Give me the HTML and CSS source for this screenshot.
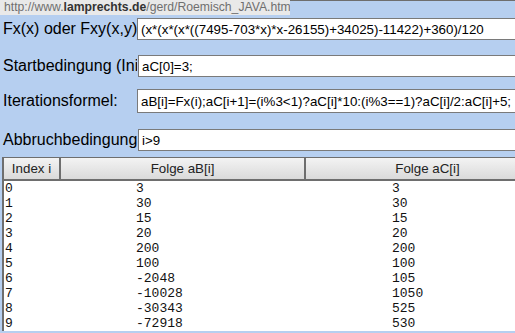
FILE: index.html
```html
<!DOCTYPE html>
<html lang="de">

<head>
    <meta charset="UTF-8">
    <title>Roemisch JAVA</title>
    <link rel="stylesheet" href="styles.css">
</head>

<body>
    <div class="status-url">http://www.<b>lamprechts.de</b>/gerd/Roemisch_JAVA.htm</div>

    <div class="page">
        <form class="params">
            <div class="param-row row-fx">
                <label>Fx(x) oder Fxy(x,y)</label>
                <input type="text" value="(x*(x*(x*((7495-703*x)*x-26155)+34025)-11422)+360)/120">
            </div>
            <div class="param-row row-start">
                <label>Startbedingung (Ini</label>
                <input type="text" value="aC[0]=3;">
            </div>
            <div class="param-row row-iter">
                <label>Iterationsformel:</label>
                <input type="text" class="wide" value="aB[i]=Fx(i);aC[i+1]=(i%3&lt;1)?aC[i]*10:(i%3==1)?aC[i]/2:aC[i]+5;">
            </div>
            <div class="param-row row-stop">
                <label>Abbruchbedingung</label>
                <input type="text" value="i&gt;9">
            </div>
        </form>

        <div class="result">
            <div class="result-head">
                <div class="col col-i">Index i</div>
                <div class="col col-b">Folge aB[i]</div>
                <div class="col col-c">Folge aC[i]</div>
            </div>
            <div class="result-body">
                <div class="line"><span class="col-i">0</span><span class="col-b">3</span><span class="col-c">3</span></div>
                <div class="line"><span class="col-i">1</span><span class="col-b">30</span><span class="col-c">30</span></div>
                <div class="line"><span class="col-i">2</span><span class="col-b">15</span><span class="col-c">15</span></div>
                <div class="line"><span class="col-i">3</span><span class="col-b">20</span><span class="col-c">20</span></div>
                <div class="line"><span class="col-i">4</span><span class="col-b">200</span><span class="col-c">200</span></div>
                <div class="line"><span class="col-i">5</span><span class="col-b">100</span><span class="col-c">100</span></div>
                <div class="line"><span class="col-i">6</span><span class="col-b">-2048</span><span class="col-c">105</span></div>
                <div class="line"><span class="col-i">7</span><span class="col-b">-10028</span><span class="col-c">1050</span></div>
                <div class="line"><span class="col-i">8</span><span class="col-b">-30343</span><span class="col-c">525</span></div>
                <div class="line"><span class="col-i">9</span><span class="col-b">-72918</span><span class="col-c">530</span></div>
            </div>
        </div>
    </div>
</body>

</html>
```

FILE: styles.css
```css
html,
body {
    overflow: hidden;
}

body {
    margin: 0;
    padding: 0;
    background-color: #b6cff0;
    font-family: "Liberation Sans", Arial, sans-serif;
    color: #000;
}

.status-url {
    position: absolute;
    top: 0;
    left: 0;
    width: 286px;
    height: 15px;
    padding-left: 4px;
    background-color: #e9e9e9;
    color: #6f6f6f;
    font-size: 12.2px;
    line-height: 15px;
    white-space: nowrap;
    overflow: hidden;
}

.status-url b {
    color: #333;
}

.page {
    width: 560px;
    border-top: 1px solid #6e6e6e;
}

.params {
    margin: 0;
    padding-top: 17px;
}

.param-row {
    display: flex;
    align-items: center;
    height: 22px;
    margin-bottom: 15px;
}

.param-row label {
    width: 134px;
    padding-left: 3px;
    font-size: 16px;
    white-space: nowrap;
    overflow: hidden;
}

.param-row input {
    width: 410px;
    height: 22px;
    box-sizing: border-box;
    margin: 0;
    padding: 0 3px;
    border: 1px solid #7a7a7a;
    background: white;
    font-family: "Liberation Sans", Arial, sans-serif;
    font-size: 13.33px;
    color: #000;
}

.row-start input,
.row-stop input {
    margin-left: 1px;
}

.row-start {
    margin-bottom: 12px;
}

.row-iter {
    height: 24px;
    margin-bottom: 16px;
}

.row-iter input {
    height: 24px;
}

.row-stop {
    margin-bottom: 6px;
}

.result {
    margin-left: 2px;
    border-left: 2px solid #6e6e6e;
    background: white;
}

.result-head {
    display: flex;
    height: 21px;
    border-top: 1px solid #6e6e6e;
    border-bottom: 2px solid #6e6e6e;
    background: linear-gradient(#f3f3f3, #dadada);
    font-size: 13.33px;
    line-height: 21px;
    color: #222;
}

.result-head .col {
    text-align: center;
}

.result-head .col-i {
    width: 55px;
    border-right: 2px solid #6e6e6e;
}

.result-head .col-b {
    width: 243px;
    border-right: 2px solid #6e6e6e;
}

.result-head .col-c {
    width: 243px;
}

.result-body {
    font-family: "Liberation Mono", "Courier New", monospace;
    font-size: 13px;
    line-height: 15px;
    color: #111;
}

.line {
    display: flex;
    height: 15px;
}

.line span {
    white-space: pre;
}

.line .col-i {
    width: 131px;
    padding-left: 1px;
}

.line .col-b {
    width: 256px;
}

.line .col-c {
    width: 150px;
}
```
